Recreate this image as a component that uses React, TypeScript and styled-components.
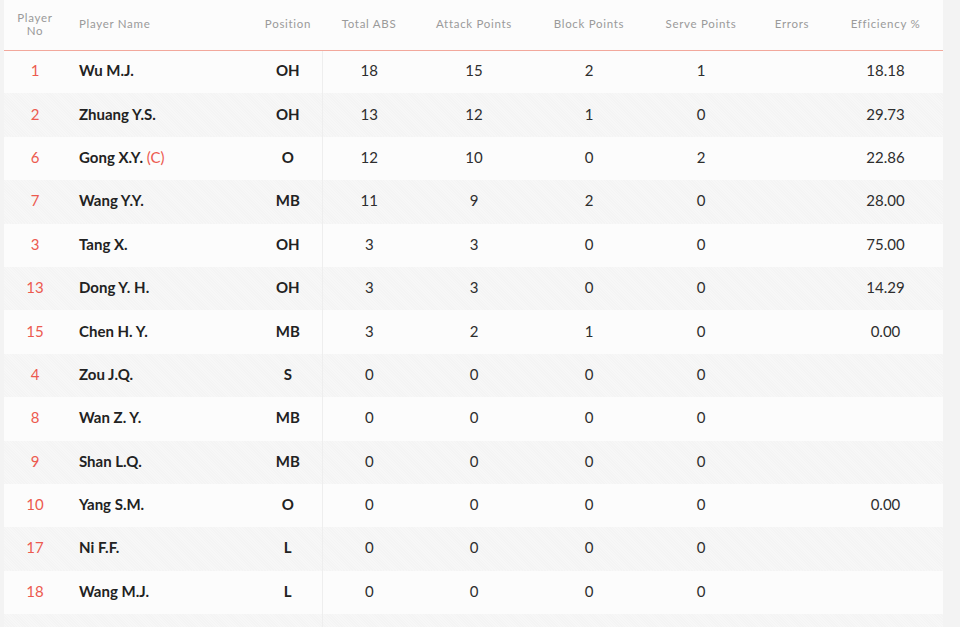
import React from "react";
import styled, { createGlobalStyle } from "styled-components";

const Global = createGlobalStyle`
  html, body { margin: 0; padding: 0; background: #f3f3f3; }
  body { font-family: "Lato", "Liberation Sans", sans-serif; }
`;

const Page = styled.div`
  width: 960px;
  height: 627px;
  overflow: hidden;
  padding-left: 4px;
  box-sizing: border-box;
`;

const Panel = styled.div`
  width: 939px;
  background: #fcfcfc;
`;

const Table = styled.table`
  width: 939px;
  border-collapse: collapse;
  table-layout: fixed;
`;

const HeadCell = styled.th<{ $align?: string; $w: number }>`
  box-sizing: border-box;
  width: ${(p) => p.$w}px;
  height: 50px;
  padding: 0 0 2px ${(p) => (p.$align === "left" ? "13px" : "0")};
  text-align: ${(p) => p.$align || "center"};
  font-weight: 400;
  font-size: 11.5px;
  line-height: 13px;
  letter-spacing: 0.7px;
  color: #9a9a9a;
  border-bottom: 1.5px solid #f2a89c;
  vertical-align: middle;
`;

const Row = styled.tr<{ $striped: boolean }>`
  height: 43.4px;
  background: ${(p) =>
    p.$striped
      ? "repeating-linear-gradient(45deg, #f4f4f4 0px, #f4f4f4 1px, #f7f7f7 1px, #f7f7f7 2px)"
      : "#fcfcfc"};
`;

const Cell = styled.td<{ $align?: string; $divider?: boolean }>`
  box-sizing: border-box;
  padding: 0 0 3px ${(p) => (p.$align === "left" ? "13px" : "0")};
  text-align: ${(p) => p.$align || "center"};
  font-size: 15px;
  color: #2e2e2e;
  vertical-align: middle;
  border-right: ${(p) => (p.$divider ? "1px solid #eeeeee" : "none")};
`;

const NumCell = styled(Cell)`
  color: #ec5a4f;
`;

const NameCell = styled(Cell)`
  font-weight: 700;
  color: #222;
`;

const PosCell = styled(Cell)`
  font-weight: 700;
  color: #222;
`;

const Captain = styled.span`
  color: #ec5a4f;
  font-weight: 400;
`;

const columns: { label: React.ReactNode; w: number; align?: string }[] = [
  { label: <>Player<br />No</>, w: 62 },
  { label: "Player Name", w: 188, align: "left" },
  { label: "Position", w: 68 },
  { label: "Total ABS", w: 94 },
  { label: "Attack Points", w: 116 },
  { label: "Block Points", w: 114 },
  { label: "Serve Points", w: 110 },
  { label: "Errors", w: 72 },
  { label: "Efficiency %", w: 115 },
];

type P = { no: string; name: string; cap?: boolean; pos: string; abs: string; atk: string; blk: string; srv: string; err: string; eff: string };

const players: P[] = [
  { no: "1", name: "Wu M.J.", pos: "OH", abs: "18", atk: "15", blk: "2", srv: "1", err: "", eff: "18.18" },
  { no: "2", name: "Zhuang Y.S.", pos: "OH", abs: "13", atk: "12", blk: "1", srv: "0", err: "", eff: "29.73" },
  { no: "6", name: "Gong X.Y.", cap: true, pos: "O", abs: "12", atk: "10", blk: "0", srv: "2", err: "", eff: "22.86" },
  { no: "7", name: "Wang Y.Y.", pos: "MB", abs: "11", atk: "9", blk: "2", srv: "0", err: "", eff: "28.00" },
  { no: "3", name: "Tang X.", pos: "OH", abs: "3", atk: "3", blk: "0", srv: "0", err: "", eff: "75.00" },
  { no: "13", name: "Dong Y. H.", pos: "OH", abs: "3", atk: "3", blk: "0", srv: "0", err: "", eff: "14.29" },
  { no: "15", name: "Chen H. Y.", pos: "MB", abs: "3", atk: "2", blk: "1", srv: "0", err: "", eff: "0.00" },
  { no: "4", name: "Zou J.Q.", pos: "S", abs: "0", atk: "0", blk: "0", srv: "0", err: "", eff: "" },
  { no: "8", name: "Wan Z. Y.", pos: "MB", abs: "0", atk: "0", blk: "0", srv: "0", err: "", eff: "" },
  { no: "9", name: "Shan L.Q.", pos: "MB", abs: "0", atk: "0", blk: "0", srv: "0", err: "", eff: "" },
  { no: "10", name: "Yang S.M.", pos: "O", abs: "0", atk: "0", blk: "0", srv: "0", err: "", eff: "0.00" },
  { no: "17", name: "Ni F.F.", pos: "L", abs: "0", atk: "0", blk: "0", srv: "0", err: "", eff: "" },
  { no: "18", name: "Wang M.J.", pos: "L", abs: "0", atk: "0", blk: "0", srv: "0", err: "", eff: "" },
  { no: "", name: "", pos: "", abs: "", atk: "", blk: "", srv: "", err: "", eff: "" },
];

export default function App() {
  return (
    <Page>
      <Global />
      <Panel>
        <Table>
          <thead>
            <tr>
              {columns.map((c, i) => (
                <HeadCell key={i} $w={c.w} $align={c.align}>
                  {c.label}
                </HeadCell>
              ))}
            </tr>
          </thead>
          <tbody>
            {players.map((p, i) => (
              <Row key={i} $striped={i % 2 === 1}>
                <NumCell>{p.no}</NumCell>
                <NameCell $align="left">
                  {p.name}
                  {p.cap && <Captain> (C)</Captain>}
                </NameCell>
                <PosCell $divider>{p.pos}</PosCell>
                <Cell>{p.abs}</Cell>
                <Cell>{p.atk}</Cell>
                <Cell>{p.blk}</Cell>
                <Cell>{p.srv}</Cell>
                <Cell>{p.err}</Cell>
                <Cell>{p.eff}</Cell>
              </Row>
            ))}
          </tbody>
        </Table>
      </Panel>
    </Page>
  );
}
